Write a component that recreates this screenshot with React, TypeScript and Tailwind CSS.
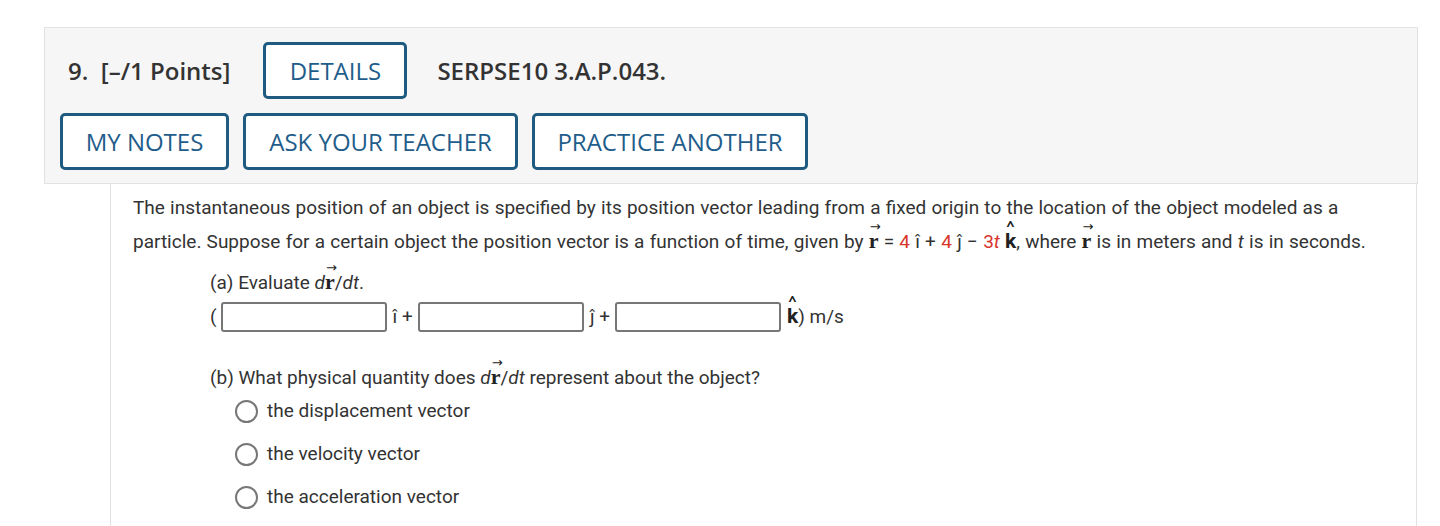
import React from "react"

const btn = "h-[57px] border-[3px] border-[#1f5b80] rounded-[5px] bg-white text-[#1f5d8a] text-[24px] font-medium flex items-center justify-center"

function R() {
  return (
    <span className="relative inline-block font-['Liberation_Serif',serif] font-bold text-[22px] leading-none text-[#222]">
      r
      <span className="absolute left-[1px] -top-[10px] text-[13px] font-normal font-['DejaVu_Sans',sans-serif]">→</span>
    </span>
  )
}

function Hat({ c, bold }: { c: string; bold?: boolean }) {
  return (
    <span className={`relative inline-block leading-none ${bold ? "font-bold text-[21px] text-[#222]" : ""}`}>
      {c}
      {bold && <span className="absolute left-[2px] -top-[12px] text-[17px] font-normal scale-x-125">^</span>}
    </span>
  )
}

function Input() {
  return <input className="w-[166px] h-[30px] border-2 border-[#777] rounded-[3px] bg-white" />
}

function Radio({ label }: { label: string }) {
  return (
    <div className="flex items-center h-[43px]">
      <span className="w-[23px] h-[23px] rounded-full border-2 border-[#777] bg-white"></span>
      <span className="ml-[9px]">{label}</span>
    </div>
  )
}

export default function App() {
  return (
    <main className="min-h-screen bg-white pt-[27px] pl-[44px] pr-[22px] font-['Roboto',sans-serif] text-[19px] text-[#333]">
      <div className="border border-[#e2e2e2] bg-[#f6f6f6] pt-[14px] pb-[13px] font-['Open_Sans',sans-serif]">
        <div className="flex items-center pl-[23px]">
          <span className="text-[24px] font-semibold text-[#333] whitespace-pre">9.  [–/1 Points]</span>
          <button className={`${btn} ml-[33px] w-[144px]`}>DETAILS</button>
          <span className="ml-[30px] text-[24px] font-semibold text-[#333]">SERPSE10 3.A.P.043.</span>
        </div>
        <div className="flex items-center gap-[14px] pl-[15px] mt-[14px]">
          <button className={`${btn} w-[169px]`}>MY NOTES</button>
          <button className={`${btn} w-[275px]`}>ASK YOUR TEACHER</button>
          <button className={`${btn} w-[276px]`}>PRACTICE ANOTHER</button>
        </div>
      </div>
      <div className="ml-[66px] mr-[1px] border-l border-r border-[#e2e2e2] pl-[22px] pr-[33px] pt-[7px] pb-[20px]">
        <p className="leading-[34px] [word-spacing:0.5px]">
          The instantaneous position of an object is specified by its position vector leading from a fixed origin to the location of the object modeled as a particle. Suppose for a certain object the position vector is a function of time, given by <R /> = <span className="text-[#d9362c]">4</span> <Hat c="î" /> + <span className="text-[#d9362c]">4</span> <Hat c="ĵ" /> − <span className="text-[#d9362c]">3<i>t</i></span> <Hat c="k" bold />, where <R /> is in meters and <i>t</i> is in seconds.
        </p>
        <div className="pl-[77px]">
          <p className="mt-[12px] leading-[24px]">(a) Evaluate <i>d</i><R />/<i>dt</i>.</p>
          <div className="flex items-center mt-[5px] h-[34px]">
            <span className="mr-[4px]">(</span>
            <Input />
            <span className="ml-[6px] mr-[5px] whitespace-pre"><Hat c="î" /> +</span>
            <Input />
            <span className="ml-[6px] mr-[5px] whitespace-pre"><Hat c="ĵ" /> +</span>
            <Input />
            <span className="ml-[6px] whitespace-pre"><Hat c="k" bold />) m/s</span>
          </div>
          <p className="mt-[32px] leading-[24px]">(b) What physical quantity does <i>d</i><R />/<i>dt</i> represent about the object?</p>
          <div className="pl-[25px] mt-[0px]">
            <Radio label="the displacement vector" />
            <Radio label="the velocity vector" />
            <Radio label="the acceleration vector" />
          </div>
        </div>
      </div>
    </main>
  )
}
